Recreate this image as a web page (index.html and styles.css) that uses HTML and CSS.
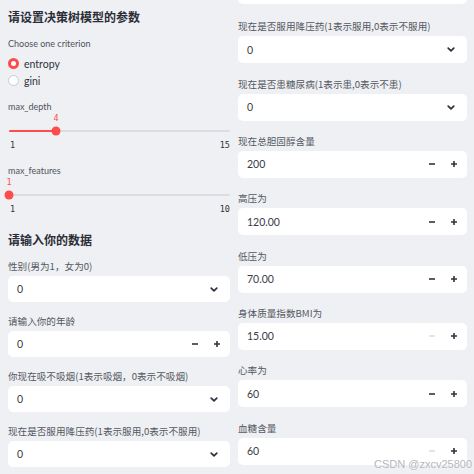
FILE: index.html
```html
<!DOCTYPE html>
<html lang="zh">
<head>
<meta charset="utf-8">
<link rel="stylesheet" href="styles.css">
</head>
<body>
<div class="page">
  <div class="col col-left">
    <h2 class="title t1">请设置决策树模型的参数</h2>
    <div class="small-label crit">Choose one criterion</div>
    <div class="radios">
      <div class="radio-row"><span class="radio on"></span><span>entropy</span></div>
      <div class="radio-row"><span class="radio"></span><span>gini</span></div>
    </div>
    <div class="small-label depth">max_depth</div>
    <div class="slider">
      <div class="slider-value"><span class="val" style="left:21.3%">4</span></div>
      <div class="slider-track">
        <div class="rail"></div>
        <div class="fill" style="width:21.3%"></div>
        <span class="thumb" style="left:21.3%"></span>
      </div>
      <div class="slider-ticks"><span>1</span><span>15</span></div>
    </div>
    <div class="small-label feat">max_features</div>
    <div class="slider">
      <div class="slider-value"><span class="val" style="left:0%">1</span></div>
      <div class="slider-track">
        <div class="rail"></div>
        <div class="fill" style="width:0%"></div>
        <span class="thumb" style="left:0%"></span>
      </div>
      <div class="slider-ticks"><span>1</span><span>10</span></div>
    </div>
    <h2 class="title t2">请输入你的数据</h2>
    <div class="widgets left-widgets">
      <div class="widget">
        <div class="label">性别(男为1，女为0)</div>
        <div class="box"><span class="value">0</span><svg class="chev" width="8" height="5" viewBox="0 0 8 5"><path d="M1.2 1.1 L4 3.9 L6.8 1.1" fill="none" stroke="#31333f" stroke-width="1.7" stroke-linecap="round" stroke-linejoin="round"/></svg></div>
      </div>
      <div class="widget">
        <div class="label">请输入你的年龄</div>
        <div class="box"><span class="value">0</span><span class="steps"><svg width="8" height="8" viewBox="0 0 8 8"><path d="M1 4 H7" stroke="#31333f" stroke-width="1.6"/></svg><svg width="8" height="8" viewBox="0 0 8 8"><path d="M1 4 H7 M4 1 V7" stroke="#31333f" stroke-width="1.6"/></svg></span></div>
      </div>
      <div class="widget">
        <div class="label">你现在吸不吸烟(1表示吸烟，0表示不吸烟)</div>
        <div class="box"><span class="value">0</span><svg class="chev" width="8" height="5" viewBox="0 0 8 5"><path d="M1.2 1.1 L4 3.9 L6.8 1.1" fill="none" stroke="#31333f" stroke-width="1.7" stroke-linecap="round" stroke-linejoin="round"/></svg></div>
      </div>
      <div class="widget">
        <div class="label">现在是否服用降压药(1表示服用,0表示不服用)</div>
        <div class="box"><span class="value">0</span><svg class="chev" width="8" height="5" viewBox="0 0 8 5"><path d="M1.2 1.1 L4 3.9 L6.8 1.1" fill="none" stroke="#31333f" stroke-width="1.7" stroke-linecap="round" stroke-linejoin="round"/></svg></div>
      </div>
    </div>
  </div>

  <div class="col col-right">
    <div class="widgets right-widgets">
      <div class="box first"></div>
      <div class="widget">
        <div class="label">现在是否服用降压药(1表示服用,0表示不服用)</div>
        <div class="box"><span class="value">0</span><svg class="chev" width="8" height="5" viewBox="0 0 8 5"><path d="M1.2 1.1 L4 3.9 L6.8 1.1" fill="none" stroke="#31333f" stroke-width="1.7" stroke-linecap="round" stroke-linejoin="round"/></svg></div>
      </div>
      <div class="widget">
        <div class="label">现在是否患糖尿病(1表示患,0表示不患)</div>
        <div class="box"><span class="value">0</span><svg class="chev" width="8" height="5" viewBox="0 0 8 5"><path d="M1.2 1.1 L4 3.9 L6.8 1.1" fill="none" stroke="#31333f" stroke-width="1.7" stroke-linecap="round" stroke-linejoin="round"/></svg></div>
      </div>
      <div class="widget">
        <div class="label">现在总胆固醇含量</div>
        <div class="box"><span class="value">200</span><span class="steps"><svg width="8" height="8" viewBox="0 0 8 8"><path d="M1 4 H7" stroke="#31333f" stroke-width="1.6"/></svg><svg width="8" height="8" viewBox="0 0 8 8"><path d="M1 4 H7 M4 1 V7" stroke="#31333f" stroke-width="1.6"/></svg></span></div>
      </div>
      <div class="widget">
        <div class="label">高压为</div>
        <div class="box"><span class="value">120.00</span><span class="steps"><svg width="8" height="8" viewBox="0 0 8 8"><path d="M1 4 H7" stroke="#31333f" stroke-width="1.6"/></svg><svg width="8" height="8" viewBox="0 0 8 8"><path d="M1 4 H7 M4 1 V7" stroke="#31333f" stroke-width="1.6"/></svg></span></div>
      </div>
      <div class="widget">
        <div class="label">低压为</div>
        <div class="box"><span class="value">70.00</span><span class="steps"><svg width="8" height="8" viewBox="0 0 8 8"><path d="M1 4 H7" stroke="#31333f" stroke-width="1.6"/></svg><svg width="8" height="8" viewBox="0 0 8 8"><path d="M1 4 H7 M4 1 V7" stroke="#31333f" stroke-width="1.6"/></svg></span></div>
      </div>
      <div class="widget">
        <div class="label">身体质量指数BMI为</div>
        <div class="box"><span class="value">15.00</span><span class="steps"><svg width="8" height="8" viewBox="0 0 8 8"><path d="M1 4 H7" stroke="#d4d5d9" stroke-width="1.3"/></svg><svg width="8" height="8" viewBox="0 0 8 8"><path d="M1 4 H7 M4 1 V7" stroke="#31333f" stroke-width="1.6"/></svg></span></div>
      </div>
      <div class="widget">
        <div class="label">心率为</div>
        <div class="box"><span class="value">60</span><span class="steps"><svg width="8" height="8" viewBox="0 0 8 8"><path d="M1 4 H7" stroke="#31333f" stroke-width="1.6"/></svg><svg width="8" height="8" viewBox="0 0 8 8"><path d="M1 4 H7 M4 1 V7" stroke="#31333f" stroke-width="1.6"/></svg></span></div>
      </div>
      <div class="widget">
        <div class="label">血糖含量</div>
        <div class="box"><span class="value">60</span><span class="steps"><svg width="8" height="8" viewBox="0 0 8 8"><path d="M1 4 H7" stroke="#d4d5d9" stroke-width="1.3"/></svg><svg width="8" height="8" viewBox="0 0 8 8"><path d="M1 4 H7 M4 1 V7" stroke="#31333f" stroke-width="1.6"/></svg></span></div>
      </div>
    </div>
  </div>
  <div class="watermark">CSDN @zxcv25800</div>
</div>
</body>
</html>
```

FILE: styles.css
```css
html, body {
  margin: 0;
  padding: 0;
  background: #eef0f4;
}
body {
  font-family: Lato, "Noto Sans CJK SC", sans-serif;
  color: #31333f;
}
.page {
  position: relative;
  width: 474px;
  height: 474px;
  overflow: hidden;
  display: flex;
  gap: 8px;
  padding-left: 8px;
  box-sizing: border-box;
}
.col {
  display: flex;
  flex-direction: column;
}
.col-left { width: 222px; }
.col-right { width: 229px; }

.title {
  margin: 0;
  font-family: "Noto Sans CJK SC", sans-serif;
  font-size: 12px;
  font-weight: 700;
  line-height: 16px;
  color: #2b2d36;
}
.t1 { margin-top: 9px; }
.t2 { margin-top: 17px; }

.small-label {
  font-size: 9px;
  line-height: 12px;
  color: #50525b;
}
.crit { margin-top: 13px; }
.depth { margin-top: 12px; }
.feat { margin-top: 14px; }

.radios {
  margin-top: 5px;
  display: flex;
  flex-direction: column;
}
.radio-row {
  height: 17px;
  display: flex;
  align-items: center;
  gap: 5px;
  font-size: 10.5px;
  color: #31333f;
}
.radio {
  width: 11px;
  height: 11px;
  border-radius: 50%;
  border: 1px solid #c9cbd1;
  background: #ffffff;
  box-sizing: border-box;
}
.radio.on {
  border: 3.5px solid #ff4b4b;
  background: #ffffff;
}

.slider { width: 221px; margin-left: 1px; }
.slider-value {
  position: relative;
  height: 11px;
}
.slider-value .val {
  position: absolute;
  top: 0;
  transform: translateX(-50%);
  font-family: "DejaVu Sans Mono", monospace;
  font-size: 8.5px;
  line-height: 11px;
  color: #ff4b4b;
}
.slider-track {
  position: relative;
  height: 14px;
}
.rail, .fill {
  position: absolute;
  left: 0;
  top: 6px;
  height: 2px;
  border-radius: 1px;
}
.rail { right: 0; background: #dcdde2; }
.fill { background: #ff4b4b; }
.thumb {
  position: absolute;
  top: 7px;
  width: 9px;
  height: 9px;
  border-radius: 50%;
  background: #ff4b4b;
  transform: translate(-50%, -50%);
}
.slider-ticks {
  margin-top: 1px;
  display: flex;
  justify-content: space-between;
  font-family: "DejaVu Sans Mono", monospace;
  font-size: 8.5px;
  line-height: 12px;
  color: #31333f;
  padding-left: 1px;
}

.widgets {
  display: flex;
  flex-direction: column;
}
.left-widgets { margin-top: 11px; gap: 12px; }
.right-widgets { gap: 13.33px; }

.widget {
  display: flex;
  flex-direction: column;
  gap: 3px;
}
.label {
  font-family: "Noto Sans CJK SC", sans-serif;
  font-size: 9.6px;
  line-height: 14px;
  color: #555861;
  white-space: nowrap;
}
.box {
  height: 26px;
  background: #ffffff;
  border-radius: 5px;
  display: flex;
  align-items: center;
  justify-content: space-between;
  padding: 0 12px 0 9px;
}
.right-widgets .box { height: 27px; }
.right-widgets .box.first {
  margin-top: -23px;
  margin-bottom: 2px;
}
.value {
  font-family: Lato, sans-serif;
  font-size: 10.5px;
  color: #3a3c46;
}
.steps {
  display: flex;
  align-items: center;
  gap: 14px;
  margin-right: -3px;
}
.steps svg { display: block; }

.watermark {
  position: absolute;
  right: 2px;
  bottom: 4px;
  font-family: "Liberation Sans", Arial, sans-serif;
  font-size: 11px;
  color: #b4b7bd;
  text-shadow: 0 0 1px #ffffff;
}
```
